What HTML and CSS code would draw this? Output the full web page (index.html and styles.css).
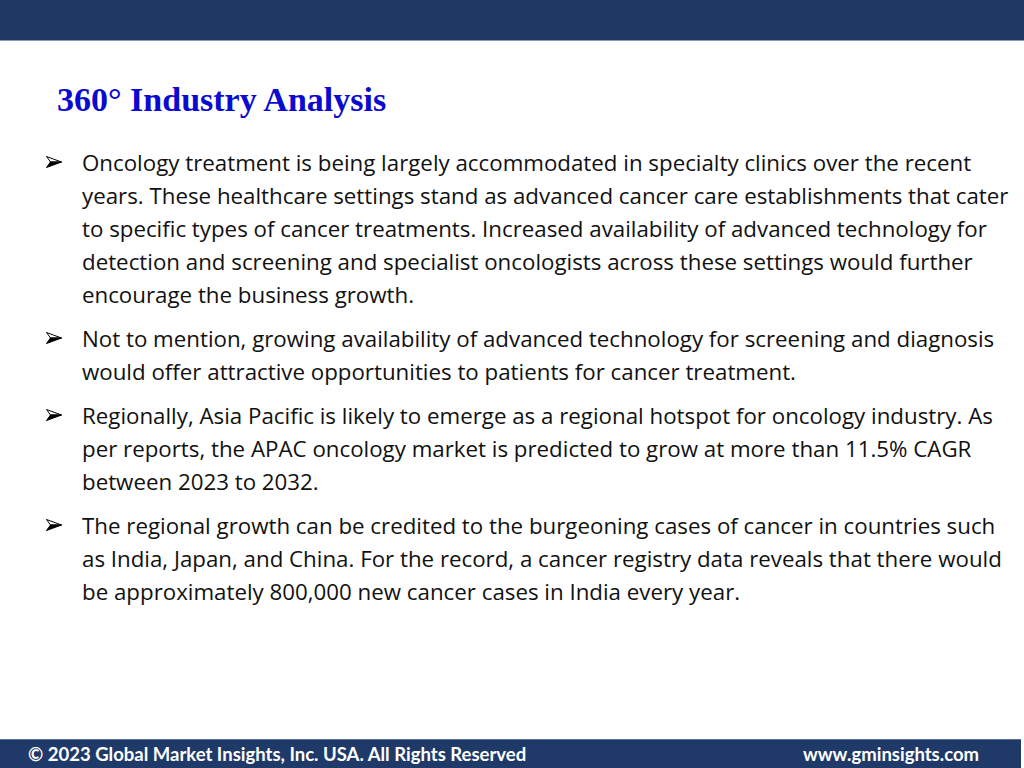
FILE: index.html
```html
<!DOCTYPE html>
<html>
<head>
<meta charset="utf-8">
<link rel="stylesheet" href="styles.css">
</head>
<body>
<div class="page">
  <header class="topbar"></header>
  <h1 class="title">360° Industry Analysis</h1>
  <ul class="points">
    <li><svg class="arrow" viewBox="0 0 16 12"><polygon points="0.5,0.5 15.5,6 4.5,6" fill="#fff" stroke="#000" stroke-width="1"/><polygon points="4.5,6 15.5,6 0.5,11.5" fill="#000" stroke="#000" stroke-width="1"/></svg><span>Oncology treatment is being largely accommodated in specialty clinics over the recent years. These healthcare settings stand as advanced cancer care establishments that cater to specific types of cancer treatments. Increased availability of advanced technology for detection and screening and specialist oncologists across these settings would further encourage the business growth.</span></li>
    <li><svg class="arrow" viewBox="0 0 16 12"><polygon points="0.5,0.5 15.5,6 4.5,6" fill="#fff" stroke="#000" stroke-width="1"/><polygon points="4.5,6 15.5,6 0.5,11.5" fill="#000" stroke="#000" stroke-width="1"/></svg><span>Not to mention, growing availability of advanced technology for screening and diagnosis would offer attractive opportunities to patients for cancer treatment.</span></li>
    <li><svg class="arrow" viewBox="0 0 16 12"><polygon points="0.5,0.5 15.5,6 4.5,6" fill="#fff" stroke="#000" stroke-width="1"/><polygon points="4.5,6 15.5,6 0.5,11.5" fill="#000" stroke="#000" stroke-width="1"/></svg><span>Regionally, Asia Pacific is likely to emerge as a regional hotspot for oncology industry. As per reports, the APAC oncology market is predicted to grow at more than 11.5% CAGR between 2023 to 2032.</span></li>
    <li><svg class="arrow" viewBox="0 0 16 12"><polygon points="0.5,0.5 15.5,6 4.5,6" fill="#fff" stroke="#000" stroke-width="1"/><polygon points="4.5,6 15.5,6 0.5,11.5" fill="#000" stroke="#000" stroke-width="1"/></svg><span>The regional growth can be credited to the burgeoning cases of cancer in countries such as India, Japan, and China. For the record, a cancer registry data reveals that there would be approximately 800,000 new cancer cases in India every year.</span></li>
  </ul>
  <footer class="footer">
    <span>© 2023 Global Market Insights, Inc. USA. All Rights Reserved</span>
    <span>www.gminsights.com</span>
  </footer>
</div>
</body>
</html>
```
FILE: styles.css
```css
html, body {
  margin: 0;
  padding: 0;
  background: #fff;
}
.page {
  display: flex;
  flex-direction: column;
  height: 768px;
  width: 1024px;
  overflow: hidden;
}
.topbar {
  height: 40px;
  background: #203864;
  border-bottom: 1px solid #8a9bb8;
  flex: none;
}
.title {
  margin: 0;
  padding: 39px 0 0 57px;
  font-family: "Liberation Serif", serif;
  font-weight: bold;
  font-size: 34px;
  line-height: 40px;
  color: #0a0ad0;
}
.points {
  list-style: none;
  margin: 0;
  padding: 26px 0 0 46px;
  width: 1018px;
  box-sizing: border-box;
  font-family: "Open Sans", Lato, sans-serif;
  font-size: 22.3px;
  line-height: 33px;
  color: #111;
}
.points li {
  display: flex;
  align-items: flex-start;
  margin-bottom: 11px;
}
.arrow {
  flex: none;
  width: 16px;
  height: 12px;
  margin-top: 10px;
  margin-right: 20px;
}
.footer {
  margin-top: auto;
  margin-right: 3px;
  height: 28px;
  background: #1f3a68;
  border-top: 1px solid #5a6f96;
  display: flex;
  justify-content: space-between;
  align-items: center;
  padding: 0 42px 0 28px;
  font-family: Lato, "Open Sans", sans-serif;
  font-weight: bold;
  font-size: 18.5px;
  color: #fff;
}
```
